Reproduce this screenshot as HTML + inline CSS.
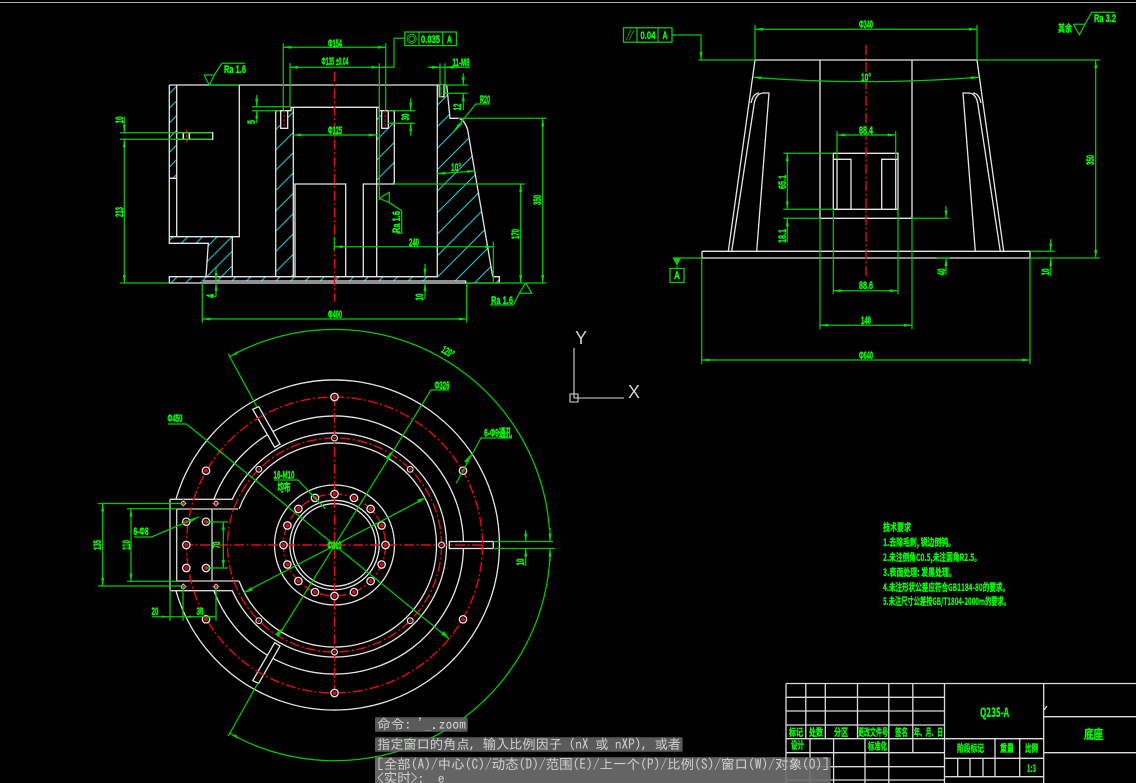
<!DOCTYPE html>
<html><head><meta charset="utf-8"><style>
html,body{margin:0;padding:0;background:#000;width:1136px;height:783px;overflow:hidden}
svg{position:absolute;left:0;top:0;display:block}
.w{fill:none;stroke:#e6e6e6;stroke-width:1.3}
.g{fill:none;stroke:#00cc00;stroke-width:1.25}
.d{fill:none;stroke:#00cc00;stroke-width:1.25;marker-start:url(#a);marker-end:url(#a)}
.e{fill:none;stroke:#00cc00;stroke-width:1.25;marker-end:url(#a)}
.r{fill:none;stroke:#e80818;stroke-width:1.4;stroke-dasharray:10 2.5 2 2.5}
.t{fill:#00ff00;stroke:#00ff00;stroke-width:.4;font:bold 11px "Liberation Sans","Noto Sans CJK SC",sans-serif;text-anchor:middle}
.c{fill:#00ff00;stroke:#00ff00;stroke-width:.35;font:bold 10px "Noto Sans CJK SC","Liberation Sans",sans-serif}
.m{fill:#d0d0d0;font:13.5px IPAGothic,"Noto Sans CJK SC",monospace;white-space:pre}
</style></head><body>
<svg width="1136" height="783" viewBox="0 0 1136 783" xmlns="http://www.w3.org/2000/svg">
<defs>
<marker id="a" viewBox="0 0 8 3" refX="8" refY="1.5" markerWidth="8" markerHeight="3" orient="auto-start-reverse" markerUnits="userSpaceOnUse"><path d="M0 0L8 1.5L0 3z" fill="#00e000"/></marker>
<pattern id="h1" width="14.7" height="14.7" patternUnits="userSpaceOnUse" patternTransform="translate(13 0)"><path d="M-2 16.7L16.7-2M-2 2L2-2M12.7 16.7L16.7 12.7" stroke="#20c8d4" stroke-width="1.1" fill="none"/></pattern>
<pattern id="h2" width="20.3" height="20.3" patternUnits="userSpaceOnUse" patternTransform="translate(19.7 0)"><path d="M-2 22.3L22.3-2M-2 2L2-2M18.3 22.3L22.3 18.3" stroke="#20c8d4" stroke-width="1.1" fill="none"/></pattern>
<pattern id="h3" width="20" height="20" patternUnits="userSpaceOnUse" patternTransform="translate(16.7 0)"><path d="M-2 22L22-2M-2 2L2-2M18 22L22 18" stroke="#20c8d4" stroke-width="1.1" fill="none"/></pattern>
<pattern id="h4" width="21.5" height="21.5" patternUnits="userSpaceOnUse" patternTransform="translate(5 0)"><path d="M-2 23.5L23.5-2M-2 2L2-2M19.5 23.5L23.5 19.5" stroke="#20c8d4" stroke-width="1.1" fill="none"/></pattern>
<g id="h"><circle r="3.7" fill="#000" stroke="#e8e8e8" stroke-width="1.3"/><circle r="2.1" fill="#d00818"/></g>
<g id="s"><circle r="2.9" fill="#000" stroke="#e8e8e8" stroke-width="1.1"/><circle r="1.3" fill="#d00818"/></g>
<g id="x"><path d="M-4 0H4M0-4V4" stroke="#e00818" stroke-width="1.2"/><circle r="2" fill="none" stroke="#e8e8e8" stroke-width=".9"/></g>
</defs>
<rect width="1136" height="783" fill="#000"/>
<path d="M0 2.5H1136" stroke="#b0b0b0" stroke-width="1"/>

<!-- ===== section view: hatch ===== -->
<polygon points="169.3,85 176.7,85 176.7,178.3 169.3,178.3" fill="url(#h1)"/>
<polygon points="169.3,236.7 232.3,236.7 232.3,276.7 206,276.7 208.3,243.3 169.3,243.3" fill="url(#h1)"/>
<polygon points="169.3,276.7 206,276.7 232.3,276.7 437.3,276.7 437.3,281 203,281 200,283 169.3,283" fill="url(#h1)"/>
<polygon points="275.7,110.7 293.3,110.7 293.3,276.7 275.7,276.7" fill="url(#h2)"/>
<polygon points="376.7,110.7 394.3,110.7 394.3,184 376.7,184" fill="url(#h3)"/>
<polygon points="437.3,85 446.7,85 450,118.3 458,118.3 467.7,130 492.7,276.7 499,276.7 499,283 466,283 466,281 437.3,281" fill="url(#h4)"/>

<!-- section view: white outline -->
<g class="w">
<path d="M169.3 85H446.7M169.3 85V243.3H208.3L206 276.7H169.3V283H499.3V276.7H492.7"/>
<path d="M176.7 85V236.7H239.3V85M169.3 178.3H176.7M169.3 236.7H176.7"/>
<path d="M176.7 132.7H212.7V139.3H176.7"/>
<path d="M206 276.7H232.3V236.7M232.3 276.7H437.3"/>
<path d="M275.7 276.7V110.7H291V107.3H379.3V110.7H394.3V184H363.3V276.7"/>
<path d="M293.3 107.3V276.7M295 276.7V184H345.7V276.7M376.7 107.3V276.7"/>
<path d="M437.3 85V276.7M446.7 85L450 118.3H458Q464 118.5 467.7 130L492.7 276.7"/>
<path d="M203 281H465.7V283"/>
<path d="M183.3 132.7V139.3M189.3 132.7V139.3" stroke-width="1.6"/>
<path d="M280.7 110.7H287.7V128.3H280.7Z" fill="#000"/>
<path d="M381.7 110.7H388.3V128.3H381.7Z" fill="#000"/>
<path d="M439.3 85V96.7H444V85" fill="#000"/>
</g>
<g stroke="#e00818" stroke-width="1" fill="none" stroke-dasharray="3 1.5">
<path d="M186.5 130V142M284 110V128M385 110V128M441.7 83V97"/>
</g>
<path class="r" d="M334.5 71.7V301.7"/>

<!-- section view: green -->
<path class="g" d="M120 283H169M466 283H546.7M120 132.7H212M120 139.3H212M209 85H239"/>
<path class="e" d="M124.3 116.7V132.7"/><path class="d" d="M124.3 139.3V283"/>
<path class="d" d="M283.3 47.3H385.7"/><path class="g" d="M283.3 43.3V110M385.7 43.3V110"/>
<path class="d" d="M290 67.3H379.3"/><path class="g" d="M290 63V107M379.3 63.3V200M379 67.3H394V38.3H404.3"/>
<rect x="404.8" y="32" width="51.6" height="13.6" fill="none" stroke="#00d000" stroke-width="1.3"/>
<path class="g" d="M419 32V45.6M442.7 32V45.6"/>
<circle cx="411.7" cy="38.8" r="4.6" fill="none" stroke="#00c400"/><circle cx="411.7" cy="38.8" r="2.8" fill="none" stroke="#00c400"/>
<path class="g" d="M204 75H214.3L209.3 85L204 75M214.3 75L222 63.3H245"/>
<path class="g" d="M252 106.7H290M252 110.7H280"/><path class="e" d="M256.7 95V106.7"/><path class="e" d="M256.7 123V110.7"/>
<path class="d" d="M293.3 135H376.7"/>
<path class="g" d="M388 110.7H415M388 123.3H415"/><path class="e" d="M410.7 98.3V110.7"/><path class="e" d="M410.7 135.7V123.3"/>
<path class="g" d="M440 63.3V97M445 63.3V94M428.3 67.3H470"/><path class="e" d="M428.3 67.3H440"/><path class="e" d="M458 67.3H445"/>
<path class="g" d="M446 85H468M445 93.3H468"/><path class="e" d="M463.3 73.3V85"/><path class="e" d="M463.3 110V93.3"/>
<path class="g" d="M490 104H475.7"/><path class="e" d="M475.7 104L454.3 130.7"/>
<path class="g" d="M458 118.3H546.7"/><path class="d" d="M542.7 118.3V283"/>
<path class="g" d="M394 184H525"/><path class="d" d="M520.7 184V283"/>
<path class="d" d="M437.3 173.7L475 171"/>
<path class="d" d="M334.3 246.7H493.3"/><path class="g" d="M334.3 236.7V250M493.3 241.7V283"/>
<path class="g" d="M379.3 198.3L389.3 192.3V202.7L379.3 198.3M389.3 202.7L401.7 210.7V233.3H397"/>
<path class="e" d="M216 268V281"/><path class="e" d="M216 296.7V283"/><path class="g" d="M212 296.7H216"/>
<path class="e" d="M425 264V276.7"/><path class="e" d="M425 299.3V283"/>
<path class="g" d="M202.3 283V322.7M466.7 283V322.7"/><path class="d" d="M202.3 319H466.7"/>
<path class="g" d="M525.7 283L519.3 293.3H531.7L525.7 283M519.3 293.3L513.3 305H490"/>

<g class="t">
<text x="335" y="47" textLength="14" lengthAdjust="spacingAndGlyphs">Φ154</text>
<text x="335" y="65" textLength="27" lengthAdjust="spacingAndGlyphs">Φ135 ±0.04</text>
<text x="430.5" y="43" textLength="19" lengthAdjust="spacingAndGlyphs">0.035</text>
<text x="449.5" y="43" textLength="5" lengthAdjust="spacingAndGlyphs">A</text>
<text x="235" y="73" textLength="22" lengthAdjust="spacingAndGlyphs">Ra 1.6</text>
<text x="461" y="66" textLength="17" lengthAdjust="spacingAndGlyphs">11-M8</text>
<text x="485" y="103" textLength="10" lengthAdjust="spacingAndGlyphs">R20</text>
<text x="335" y="134" textLength="14" lengthAdjust="spacingAndGlyphs">Φ125</text>
<text x="456" y="171" textLength="10" lengthAdjust="spacingAndGlyphs">10°</text>
<text x="414" y="246" textLength="10" lengthAdjust="spacingAndGlyphs">240</text>
<text x="335" y="318" textLength="14" lengthAdjust="spacingAndGlyphs">Φ400</text>
<text x="502" y="304" textLength="22" lengthAdjust="spacingAndGlyphs">Ra 1.6</text>
<text transform="rotate(-90 123 120)" x="123" y="120" textLength="7" lengthAdjust="spacingAndGlyphs">10</text>
<text transform="rotate(-90 123 212)" x="123" y="212" textLength="10" lengthAdjust="spacingAndGlyphs">213</text>
<text transform="rotate(-90 255 122)" x="255" y="122" textLength="4" lengthAdjust="spacingAndGlyphs">5</text>
<text transform="rotate(-90 409 117)" x="409" y="117" textLength="7" lengthAdjust="spacingAndGlyphs">30</text>
<text transform="rotate(-90 461 107)" x="461" y="107" textLength="7" lengthAdjust="spacingAndGlyphs">12</text>
<text transform="rotate(-90 541 200)" x="541" y="200" textLength="10" lengthAdjust="spacingAndGlyphs">350</text>
<text transform="rotate(-90 519 234)" x="519" y="234" textLength="10" lengthAdjust="spacingAndGlyphs">170</text>
<text transform="rotate(-90 400 222)" x="400" y="222" textLength="22" lengthAdjust="spacingAndGlyphs">Ra 1.6</text>
<text transform="rotate(-90 214 296)" x="214" y="296" textLength="4" lengthAdjust="spacingAndGlyphs">4</text>
<text transform="rotate(-90 423 297)" x="423" y="297" textLength="7" lengthAdjust="spacingAndGlyphs">10</text>
</g>

<!-- ===== front view ===== -->
<g class="w">
<path d="M755 60H977M702 251.3H1030M702 258H1030M702 251.3V258M1030 251.3V258"/>
<path d="M755 60L728.3 251.3M977 60L1003.7 251.3"/>
<path d="M731.7 251.3L754 105Q755.5 93.5 763 93H769L756.7 251.3M1000.3 251.3L978 105Q976.5 93.5 969 93H963L975.3 251.3"/>
<path d="M751 103Q753 93.5 759 93M981 103Q979 93.5 973 93"/>
<path d="M820 60V218.3H912V60M833.3 209.3V153.3H898V209.3H833.3"/>
<path d="M833.3 159.3H851V209.3M837 159.3V209.3M881.7 209.3V159.3H898M895.7 159.3V209.3"/>
</g>
<path class="r" d="M866 45V276.7"/>

<rect x="623.5" y="27.8" width="48.5" height="14.4" fill="none" stroke="#00d000" stroke-width="1.3"/>
<path class="g" d="M637 27.8V42.2M658 27.8V42.2M672 35H701"/>
<path d="M626 40L631 30M629 40L634 30" stroke="#00c400" stroke-width=".8"/>
<path class="e" d="M701 35V60"/>
<path class="g" d="M698.3 60H755M977 60H1100M755 25V60M977 25V60"/><path class="d" d="M755 29.3H977"/>
<path class="d" d="M1095.7 60V258"/><path class="g" d="M1030 258H1100M1030 251.3H1055"/>
<path class="e" d="M1050.7 239V251.3"/><path class="e" d="M1050.7 276V258"/>
<path class="d" d="M753.3 77.3Q866 86 979 77.3"/>
<path class="d" d="M837 135H895.7"/><path class="g" d="M837 131V159M895.7 131V159"/>
<path class="g" d="M783.3 153.3H833M783.3 209.3H833M783.3 218.3H820"/>
<path class="d" d="M787.3 153.3V209.3"/><path class="e" d="M787.3 241.7V218.3"/>
<path class="g" d="M912 218.3H949M936.7 258H950"/><path class="e" d="M946 206V218.3"/><path class="e" d="M946 275V258"/>
<path class="g" d="M833.3 209V294.3M898 209V294.3"/><path class="d" d="M833.3 290.7H898"/>
<path class="g" d="M820 218V329.3M912 218V329.3"/><path class="d" d="M820 325.3H912"/>
<path class="g" d="M701.7 258V364.3M1030 258V364.3"/><path class="d" d="M701.7 360H1030"/>
<path class="g" d="M672.7 258H702"/><path d="M672.7 258H681L677 266Z" fill="#00d000"/>
<rect x="670" y="268.5" width="14" height="14" fill="none" stroke="#00d000" stroke-width="1.3"/>
<path class="g" d="M677 266V268.5M1073.3 24.3H1085L1079.3 34.7L1073.3 24.3M1079.3 34.7L1091.7 12.3H1115"/>
<g class="t">
<text x="866" y="28" textLength="14" lengthAdjust="spacingAndGlyphs">Φ340</text>
<text x="648" y="39" textLength="15" lengthAdjust="spacingAndGlyphs">0.04</text>
<text x="665" y="39" textLength="5" lengthAdjust="spacingAndGlyphs">A</text>
<text x="866" y="81" textLength="10" lengthAdjust="spacingAndGlyphs">10°</text>
<text x="866" y="134" textLength="14" lengthAdjust="spacingAndGlyphs">88.4</text>
<text x="866" y="289" textLength="14" lengthAdjust="spacingAndGlyphs">88.6</text>
<text x="866" y="324" textLength="10" lengthAdjust="spacingAndGlyphs">140</text>
<text x="866" y="359" textLength="14" lengthAdjust="spacingAndGlyphs">Φ640</text>
<text x="677" y="279" textLength="6" lengthAdjust="spacingAndGlyphs">A</text>
<text x="1105" y="22" textLength="22" lengthAdjust="spacingAndGlyphs">Ra 3.2</text>
<text transform="rotate(-90 1094 160)" x="1094" y="160" textLength="10" lengthAdjust="spacingAndGlyphs">350</text>
<text transform="rotate(-90 786 182)" x="786" y="182" textLength="14" lengthAdjust="spacingAndGlyphs">65.1</text>
<text transform="rotate(-90 786 236)" x="786" y="236" textLength="14" lengthAdjust="spacingAndGlyphs">18.1</text>
<text transform="rotate(-90 945 272)" x="945" y="272" textLength="7" lengthAdjust="spacingAndGlyphs">40</text>
<text transform="rotate(-90 1049 272)" x="1049" y="272" textLength="7" lengthAdjust="spacingAndGlyphs">10</text>
</g>
<text class="c" x="1058" y="32" textLength="14" lengthAdjust="spacingAndGlyphs">其余</text>

<!-- ===== UCS ===== -->
<path d="M574 348V398H624M570 394H578V402H570Z" fill="none" stroke="#d8d8d8" stroke-width="1.1"/>
<text x="575" y="344" fill="#d0d0d0" style="font:18px 'Liberation Sans',sans-serif">Y</text>
<text x="628" y="398" fill="#d0d0d0" style="font:18px 'Liberation Sans',sans-serif">X</text>

<!-- ===== plan view ===== -->
<g class="w">
<path d="M176 499A165 165 0 1 1 176 591"/>
<path d="M214 499A129 129 0 1 1 214 591"/>
<path d="M232.4 499A112 112 0 1 1 232.4 591"/>
<path d="M239.1 509A102 102 0 1 1 239.1 581"/>
<circle cx="334.5" cy="545" r="60"/>
<circle cx="334.5" cy="545" r="44.7"/>
<circle cx="334.5" cy="545" r="41.3"/>
<path d="M170 499.3H233M170 590.7H233M170 499.3V590.7M176.7 509H238M176.7 581H239M176.7 509V581M212 509V581" stroke="#d8d8d8"/>
<polygon points="252.7,409.3 258.7,406.7 280,444 274.7,447.3" fill="#000"/>
<polygon points="252.7,680.7 258.7,683.3 280,646 274.7,642.7" fill="#000"/>
<rect x="449.3" y="541.5" width="44" height="7" fill="#000"/>
</g>
<g class="r">
<circle cx="334.5" cy="545" r="148"/>
<circle cx="334.5" cy="545" r="107"/>
<circle cx="334.5" cy="545" r="51"/>
<path d="M183 545H484M334.5 396V693"/>
</g>
<use href="#h" x="385.5" y="545"/><use href="#h" x="381.6" y="525.5"/><use href="#h" x="370.6" y="508.9"/><use href="#h" x="354" y="497.9"/>
<use href="#h" x="334.5" y="494"/><use href="#h" x="315" y="497.9"/><use href="#h" x="298.4" y="508.9"/><use href="#h" x="287.4" y="525.5"/>
<use href="#h" x="283.5" y="545"/><use href="#h" x="287.4" y="564.5"/><use href="#h" x="298.4" y="581.1"/><use href="#h" x="315" y="592.1"/>
<use href="#h" x="334.5" y="596"/><use href="#h" x="354" y="592.1"/><use href="#h" x="370.6" y="581.1"/><use href="#h" x="381.6" y="564.5"/>
<use href="#h" x="334.5" y="397"/><use href="#h" x="334.5" y="693"/><use href="#h" x="206" y="470.7"/><use href="#h" x="206" y="619.3"/><use href="#h" x="463" y="470.7"/><use href="#h" x="463" y="619.3"/>
<use href="#s" x="334.5" y="438"/><use href="#s" x="334.5" y="652"/><use href="#s" x="410.2" y="469.3"/><use href="#s" x="410.2" y="620.7"/><use href="#s" x="258.8" y="469.3"/><use href="#s" x="258.8" y="620.7"/><use href="#s" x="441.5" y="545"/>
<use href="#h" x="186.3" y="521.7"/><use href="#h" x="206" y="521.7"/><use href="#h" x="186.3" y="545"/><use href="#h" x="186.3" y="568"/><use href="#h" x="206" y="568"/>
<use href="#x" x="183.3" y="503.3"/><use href="#x" x="216" y="503.3"/><use href="#x" x="183.3" y="586.7"/><use href="#x" x="216" y="586.7"/>

<!-- plan view: green -->
<path class="g" stroke-width="1.3" d="M229 357A215.5 215.5 0 0 1 549.5 530M550 556A215.5 215.5 0 0 1 229 733"/>
<path class="e" d="M550 528V541.5"/><path class="e" d="M550 562V548.5"/>
<path class="g" d="M228.3 354L257 407M228.3 736L258 683M493 541.5H553M493 548.5H555"/>
<path d="M229.5 356.5L238 351L237 354.5Z M229.5 733.5L238 739L237 735.5Z" fill="#00d000"/>
<path class="e" d="M525.7 530V541.5"/><path class="e" d="M525.7 566V548.5"/>
<path class="g" d="M168 424H186.5L449.3 639"/>
<path d="M223.3 455L216 447.5L218.5 451.5Z M449.3 639L441 634.5L444 631Z" fill="#00d000"/>
<path class="g" d="M449 390H431L278 636.7"/>
<path d="M388 460L392 451L385.5 458Z M278 636.7L282 628L275.5 634Z" fill="#00d000"/>
<path class="g" d="M426 497.7L244 592.7"/>
<path d="M426 497.7L417 499.5L419 503Z M244 592.7L253 590.5L251 587Z" fill="#00d000"/>
<path class="g" d="M512 438H481L456 483.5"/><path d="M467 463L471 454L464 461.5Z" fill="#00d000"/>
<path class="g" d="M274 480H298L325.7 509"/><path d="M313 496L307 489.5L310 494Z" fill="#00d000"/>
<path class="g" d="M134 537H151.5L199.3 516.7"/><path d="M199 517L190 519L191.5 522Z" fill="#00d000"/>
<path class="g" d="M98 503.5H183M98 586H183M127 508.7H176.7M127 581.3H176.7"/>
<path class="d" d="M102.7 503.5V586"/><path class="d" d="M131 508.7V581.3"/>
<path class="g" d="M206 522H228M206 568H228"/><path class="d" d="M223.3 522V568"/>
<path class="g" d="M170 590V621M183 587V621M216 587V621M152 616.7H216"/>
<path d="M170 616.7L162 615.5V618Z M183 616.7L191 615.5V618Z M216 616.7L208 615.5V618Z" fill="#00d000"/>
<g class="t">
<text x="175" y="422" textLength="15" lengthAdjust="spacingAndGlyphs">Φ450</text>
<text x="442" y="389" textLength="15" lengthAdjust="spacingAndGlyphs">Φ326</text>
<text x="284" y="478.5" textLength="21" lengthAdjust="spacingAndGlyphs">16-M10</text>
<text x="498" y="436.5" textLength="28" lengthAdjust="spacingAndGlyphs">6-Φ9通孔</text>
<text x="141" y="535" textLength="15" lengthAdjust="spacingAndGlyphs">6-Φ8</text>
<text x="334.5" y="549" textLength="14" lengthAdjust="spacingAndGlyphs">Φ310</text>
<text x="155" y="615" textLength="7" lengthAdjust="spacingAndGlyphs">20</text>
<text x="200" y="615" textLength="7" lengthAdjust="spacingAndGlyphs">30</text>
<text x="284" y="491" textLength="13" lengthAdjust="spacingAndGlyphs">均布</text>
<text transform="rotate(30 446 355)" x="446" y="355" textLength="13" lengthAdjust="spacingAndGlyphs">120°</text>
<text transform="rotate(-90 101 545)" x="101" y="545" textLength="10" lengthAdjust="spacingAndGlyphs">135</text>
<text transform="rotate(-90 130 545)" x="130" y="545" textLength="10" lengthAdjust="spacingAndGlyphs">110</text>
<text transform="rotate(-90 220 545)" x="220" y="545" textLength="7" lengthAdjust="spacingAndGlyphs">70</text>
<text transform="rotate(-90 524 562)" x="524" y="562" textLength="7" lengthAdjust="spacingAndGlyphs">10</text>
</g>

<!-- ===== tech requirements ===== -->
<g class="c">
<text x="883" y="531" textLength="28" lengthAdjust="spacingAndGlyphs">技术要求</text>
<text x="883" y="546" textLength="72" lengthAdjust="spacingAndGlyphs">1.去除毛刺, 锐边倒钝。</text>
<text x="883" y="561" textLength="98" lengthAdjust="spacingAndGlyphs">2.未注倒角C0.5,未注圆角R2.5。</text>
<text x="883" y="576" textLength="73" lengthAdjust="spacingAndGlyphs">3.表面处理: 发黑处理。</text>
<text x="883" y="591" textLength="126" lengthAdjust="spacingAndGlyphs">4.未注形状公差应符合GB1184-80的要求。</text>
<text x="883" y="605" textLength="127" lengthAdjust="spacingAndGlyphs">5.未注尺寸公差按GB/T1804-2000m的要求。</text>
</g>

<!-- ===== title block ===== -->
<g class="w" style="stroke:#dcdcdc">
<path d="M786 683.5H1136M786 697.3H944.5M786 711H944.5M786 725H944.5M786 738.7H1043.7M786 752.7H944.5M786 766.7H944.5M786 780H944.5"/>
<path d="M786 683.5V783M805.8 683.5V738.7M825.3 683.5V738.7M857.5 683.5V738.7M888.8 683.5V783M912.8 683.5V752.7M944.5 683.5V783M1043.7 683.5V783"/>
<path d="M810 738.7V783M833.6 738.7V783M865 738.7V783"/>
<path d="M1043.7 716.7H1136M1043.7 752.7H1136M944.5 758.3H1043.7M944.5 776.7H1043.7"/>
<path d="M995 738.7V776.7M1019.7 738.7V776.7M957.7 758.3V776.7M970 758.3V776.7M983 758.3V776.7"/>
<path d="M1044 710L1047 706"/>
</g>
<g class="c">
<text x="789" y="736" textLength="14" lengthAdjust="spacingAndGlyphs">标记</text>
<text x="809" y="736" textLength="14" lengthAdjust="spacingAndGlyphs">处数</text>
<text x="834" y="736" textLength="14" lengthAdjust="spacingAndGlyphs">分区</text>
<text x="858" y="736" textLength="30" lengthAdjust="spacingAndGlyphs">更改文件号</text>
<text x="895" y="736" textLength="13" lengthAdjust="spacingAndGlyphs">签名</text>
<text x="914" y="736" textLength="29" lengthAdjust="spacingAndGlyphs">年、月、日</text>
<text x="791" y="749" textLength="13" lengthAdjust="spacingAndGlyphs">设计</text>
<text x="868" y="750" textLength="19" lengthAdjust="spacingAndGlyphs">标准化</text>
<text x="957" y="752" textLength="27" lengthAdjust="spacingAndGlyphs">阶段标记</text>
<text x="1000" y="752" textLength="14" lengthAdjust="spacingAndGlyphs">重量</text>
<text x="1025" y="752" textLength="13" lengthAdjust="spacingAndGlyphs">比例</text>
<text x="1027" y="772" textLength="9" lengthAdjust="spacingAndGlyphs">1:3</text>
<text x="980" y="717" textLength="29" lengthAdjust="spacingAndGlyphs" style="font-size:13px">Q235-A</text>
<text x="1084" y="739" textLength="19" lengthAdjust="spacingAndGlyphs" style="font-size:13px">底座</text>
</g>

<!-- ===== command overlay ===== -->
<rect x="375" y="717.3" width="92.7" height="14.4" rx="1" fill="#666" fill-opacity=".88"/>
<rect x="375" y="737.3" width="307.6" height="14.4" rx="1" fill="#666" fill-opacity=".88"/>
<rect x="375" y="757.3" width="455.7" height="26" rx="1" fill="#6c6c6c" fill-opacity=".92"/>
<text class="m" x="377" y="729" textLength="89" lengthAdjust="spacingAndGlyphs">命令: '_.zoom</text>
<text class="m" x="377" y="749" textLength="304" lengthAdjust="spacingAndGlyphs">指定窗口的角点, 输入比例因子 (nX 或 nXP), 或者</text>
<text class="m" x="377" y="769" textLength="452" lengthAdjust="spacingAndGlyphs">[全部(A)/中心(C)/动态(D)/范围(E)/上一个(P)/比例(S)/窗口(W)/对象(O)]</text>
<text class="m" x="377" y="783">&lt;实时&gt;:  e</text>
</svg>
</body></html>
